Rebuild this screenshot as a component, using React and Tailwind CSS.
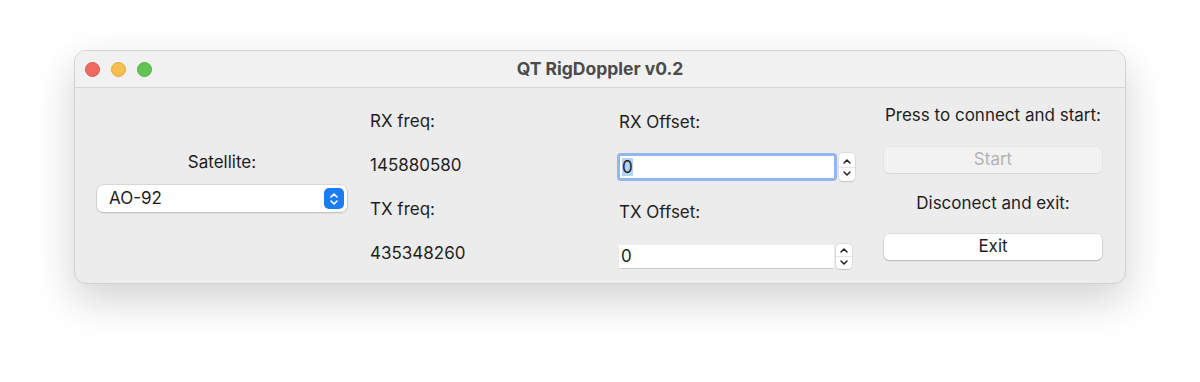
import React from 'react';

const font = { fontFamily: 'Inter, "Noto Sans", sans-serif' };

function Stepper({ h }) {
  return (
    <div className={`ml-[2px] w-[16px] ${h} rounded-[4px] bg-white shadow-[0_0_0_0.5px_rgba(0,0,0,0.12),0_1px_1px_rgba(0,0,0,0.12)] flex flex-col items-center justify-center`}>
      <svg width="10" height="7" viewBox="0 0 10 7" className="mb-[2px]">
        <path d="M2 5 L5 2 L8 5" fill="none" stroke="#222" strokeWidth="1.5" strokeLinecap="round" strokeLinejoin="round" />
      </svg>
      <div className="w-full h-px bg-[#e4e4e4]" />
      <svg width="10" height="7" viewBox="0 0 10 7" className="mt-[2px]">
        <path d="M2 2 L5 5 L8 2" fill="none" stroke="#222" strokeWidth="1.5" strokeLinecap="round" strokeLinejoin="round" />
      </svg>
    </div>
  );
}

export default function App() {
  return (
    <div className="w-[1200px] h-[382px] bg-white flex justify-center pt-[50px]" style={font}>
      <div className="w-[1052px] h-[234px] rounded-[12px] bg-[#ececec] border border-[#d2d2d2] shadow-[0_16px_40px_rgba(0,0,0,0.18)] overflow-hidden flex flex-col text-[#1e1e1e]">
        {/* Title bar */}
        <div className="h-[37px] shrink-0 bg-[#f1f1f1] border-b border-[#d6d6d6] flex items-center relative">
          <div className="flex items-center gap-[11px] pl-[10px]">
            <span className="w-[15px] h-[15px] rounded-full bg-[#ee6a5f] border border-[#dd5a4f]" />
            <span className="w-[15px] h-[15px] rounded-full bg-[#f5be4f] border border-[#e0a93e]" />
            <span className="w-[15px] h-[15px] rounded-full bg-[#61c454] border border-[#52b045]" />
          </div>
          <div className="absolute inset-0 flex items-center justify-center text-[17.5px] font-bold text-[#4b4b4b]">
            QT RigDoppler v0.2
          </div>
        </div>

        {/* Body */}
        <div className="flex flex-1 text-[17px]">
          {/* Satellite */}
          <div className="ml-[22px] w-[250px] flex flex-col pt-[53px]">
            <div className="h-[44px] flex items-center justify-center">Satellite:</div>
            <div className="h-[27px] rounded-[6px] bg-white shadow-[0_0_0_0.5px_rgba(0,0,0,0.15),0_1px_2px_rgba(0,0,0,0.15)] flex items-center justify-between pl-[12px] pr-[3px]">
              <span>AO-92</span>
              <div className="w-[20px] h-[21px] rounded-[5px] bg-[#1b7cf6] flex flex-col items-center justify-center gap-[2px]">
                <svg width="10" height="6" viewBox="0 0 10 6">
                  <path d="M2 5 L5 2 L8 5" fill="none" stroke="white" strokeWidth="1.6" strokeLinecap="round" strokeLinejoin="round" />
                </svg>
                <svg width="10" height="6" viewBox="0 0 10 6">
                  <path d="M2 1 L5 4 L8 1" fill="none" stroke="white" strokeWidth="1.6" strokeLinecap="round" strokeLinejoin="round" />
                </svg>
              </div>
            </div>
          </div>

          {/* Frequencies */}
          <div className="ml-[23px] w-[247px] flex flex-col pt-[12px]">
            <div className="h-[44px] flex items-center">RX freq:</div>
            <div className="h-[44px] flex items-center">145880580</div>
            <div className="h-[44px] flex items-center">TX freq:</div>
            <div className="h-[44px] flex items-center">435348260</div>
          </div>

          {/* Offsets */}
          <div className="w-[240px] flex flex-col pt-[13px]">
            <div className="h-[44px] flex items-center pl-[2px]">RX Offset:</div>
            <div className="flex items-center h-[28px] mt-[8px]">
              <div className="w-[220px] h-[28px] rounded-[4px] p-[3px] bg-[#93b6ee]">
                <div className="w-full h-full bg-white flex items-center pl-[2px]">
                  <span className="bg-[#b3d4fc] leading-[18px]">0</span>
                </div>
              </div>
              <Stepper h="h-[28px]" />
            </div>
            <div className="h-[44px] mt-[10px] flex items-center pl-[2px]">TX Offset:</div>
            <div className="flex items-center h-[25px] mt-[9px] ml-[2px]">
              <div className="w-[215px] h-[23px] bg-white shadow-[0_0.5px_1px_rgba(0,0,0,0.15)] flex items-center pl-[2px]">
                0
              </div>
              <Stepper h="h-[25px]" />
            </div>
          </div>

          {/* Actions */}
          <div className="ml-[27px] w-[218px] flex flex-col pt-[6px]">
            <div className="h-[44px] flex items-center justify-center whitespace-nowrap">Press to connect and start:</div>
            <div className="h-[44px] flex items-center">
              <div className="w-full h-[26px] rounded-[5px] bg-[#f2f2f2] shadow-[0_0_0_0.5px_rgba(0,0,0,0.06),0_1px_1px_rgba(0,0,0,0.06)] flex items-center justify-center text-[#b2b2b2]">
                Start
              </div>
            </div>
            <div className="h-[43px] flex items-center justify-center">Disconect and exit:</div>
            <div className="h-[44px] flex items-center">
              <div className="w-full h-[26px] rounded-[5px] bg-white shadow-[0_0_0_0.5px_rgba(0,0,0,0.14),0_1px_1.5px_rgba(0,0,0,0.16)] flex items-center justify-center">
                Exit
              </div>
            </div>
          </div>
        </div>
      </div>
    </div>
  );
}
